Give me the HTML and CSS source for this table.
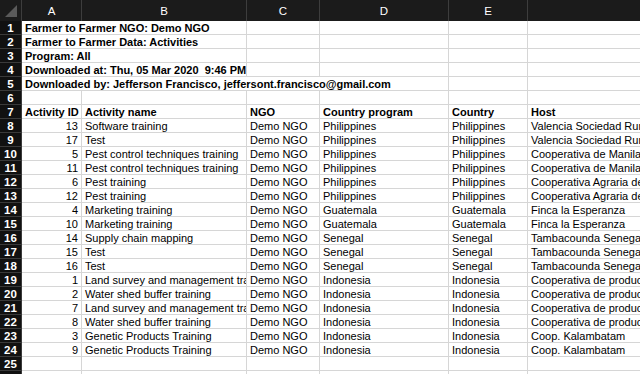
FILE: index.html
```html
<!DOCTYPE html>
<html>
<head>
<meta charset="utf-8">
<link rel="stylesheet" href="styles.css">
</head>
<body>
<div class="sheet">
  <div class="ch corner"><span class="tri"></span></div>
  <div class="ch">A</div><div class="ch">B</div><div class="ch">C</div><div class="ch">D</div><div class="ch">E</div><div class="ch"></div>

  <div class="rn">1</div><div class="c b span2">Farmer to Farmer NGO: Demo NGO</div><div class="c"></div><div class="c"></div><div class="c"></div><div class="c"></div>
  <div class="rn">2</div><div class="c b span2">Farmer to Farmer Data: Activities</div><div class="c"></div><div class="c"></div><div class="c"></div><div class="c"></div>
  <div class="rn">3</div><div class="c b span2">Program: All</div><div class="c"></div><div class="c"></div><div class="c"></div><div class="c"></div>
  <div class="rn">4</div><div class="c b span2">Downloaded at: Thu, 05 Mar 2020&nbsp; 9:46 PM UTC</div><div class="c"></div><div class="c"></div><div class="c"></div><div class="c"></div>
  <div class="rn">5</div><div class="c b span4">Downloaded by: Jefferson Francisco, jeffersont.francisco@gmail.com</div><div class="c"></div><div class="c"></div>
  <div class="rn">6</div><div class="c"></div><div class="c"></div><div class="c"></div><div class="c"></div><div class="c"></div><div class="c"></div>
  <div class="rn">7</div><div class="c b">Activity ID</div><div class="c b">Activity name</div><div class="c b">NGO</div><div class="c b">Country program</div><div class="c b">Country</div><div class="c b">Host</div>

  <div class="rn">8</div><div class="c n">13</div><div class="c">Software training</div><div class="c">Demo NGO</div><div class="c">Philippines</div><div class="c">Philippines</div><div class="c">Valencia Sociedad Rural</div>
  <div class="rn">9</div><div class="c n">17</div><div class="c">Test</div><div class="c">Demo NGO</div><div class="c">Philippines</div><div class="c">Philippines</div><div class="c">Valencia Sociedad Rural</div>
  <div class="rn">10</div><div class="c n">5</div><div class="c">Pest control techniques training</div><div class="c">Demo NGO</div><div class="c">Philippines</div><div class="c">Philippines</div><div class="c">Cooperativa de Manila</div>
  <div class="rn">11</div><div class="c n">11</div><div class="c">Pest control techniques training</div><div class="c">Demo NGO</div><div class="c">Philippines</div><div class="c">Philippines</div><div class="c">Cooperativa de Manila</div>
  <div class="rn">12</div><div class="c n">6</div><div class="c">Pest training</div><div class="c">Demo NGO</div><div class="c">Philippines</div><div class="c">Philippines</div><div class="c">Cooperativa Agraria de</div>
  <div class="rn">13</div><div class="c n">12</div><div class="c">Pest training</div><div class="c">Demo NGO</div><div class="c">Philippines</div><div class="c">Philippines</div><div class="c">Cooperativa Agraria de</div>
  <div class="rn">14</div><div class="c n">4</div><div class="c">Marketing training</div><div class="c">Demo NGO</div><div class="c">Guatemala</div><div class="c">Guatemala</div><div class="c">Finca la Esperanza</div>
  <div class="rn">15</div><div class="c n">10</div><div class="c">Marketing training</div><div class="c">Demo NGO</div><div class="c">Guatemala</div><div class="c">Guatemala</div><div class="c">Finca la Esperanza</div>
  <div class="rn">16</div><div class="c n">14</div><div class="c">Supply chain mapping</div><div class="c">Demo NGO</div><div class="c">Senegal</div><div class="c">Senegal</div><div class="c">Tambacounda Senegal</div>
  <div class="rn">17</div><div class="c n">15</div><div class="c">Test</div><div class="c">Demo NGO</div><div class="c">Senegal</div><div class="c">Senegal</div><div class="c">Tambacounda Senegal</div>
  <div class="rn">18</div><div class="c n">16</div><div class="c">Test</div><div class="c">Demo NGO</div><div class="c">Senegal</div><div class="c">Senegal</div><div class="c">Tambacounda Senegal</div>
  <div class="rn">19</div><div class="c n">1</div><div class="c">Land survey and management training</div><div class="c">Demo NGO</div><div class="c">Indonesia</div><div class="c">Indonesia</div><div class="c">Cooperativa de productores</div>
  <div class="rn">20</div><div class="c n">2</div><div class="c">Water shed buffer training</div><div class="c">Demo NGO</div><div class="c">Indonesia</div><div class="c">Indonesia</div><div class="c">Cooperativa de productores</div>
  <div class="rn">21</div><div class="c n">7</div><div class="c">Land survey and management training</div><div class="c">Demo NGO</div><div class="c">Indonesia</div><div class="c">Indonesia</div><div class="c">Cooperativa de productores</div>
  <div class="rn">22</div><div class="c n">8</div><div class="c">Water shed buffer training</div><div class="c">Demo NGO</div><div class="c">Indonesia</div><div class="c">Indonesia</div><div class="c">Cooperativa de productores</div>
  <div class="rn">23</div><div class="c n">3</div><div class="c">Genetic Products Training</div><div class="c">Demo NGO</div><div class="c">Indonesia</div><div class="c">Indonesia</div><div class="c">Coop. Kalambatam</div>
  <div class="rn">24</div><div class="c n">9</div><div class="c">Genetic Products Training</div><div class="c">Demo NGO</div><div class="c">Indonesia</div><div class="c">Indonesia</div><div class="c">Coop. Kalambatam</div>
  <div class="rn">25</div><div class="c"></div><div class="c"></div><div class="c"></div><div class="c"></div><div class="c"></div><div class="c"></div>
  <div class="rn">26</div><div class="c"></div><div class="c"></div><div class="c"></div><div class="c"></div><div class="c"></div><div class="c"></div>
</div>
</body>
</html>
```
FILE: styles.css
```css
html, body {
  margin: 0;
  padding: 0;
  background: #ffffff;
  overflow: hidden;
}
body {
  width: 640px;
  height: 374px;
  font-family: "Liberation Sans", Arial, sans-serif;
  font-size: 11px;
  color: #000;
}
.sheet {
  display: grid;
  grid-template-columns: 22px 60px 165px 73px 129px 79px 120px;
  grid-template-rows: 21px;
  grid-auto-rows: 14px;
  width: 668px;
}
.ch {
  background: #1b1b1b;
  color: #ffffff;
  text-align: center;
  line-height: 22px;
  font-size: 11.5px;
  border-right: 1px solid #3d3d3d;
  box-sizing: border-box;
}
.corner {
  position: relative;
}
.tri {
  position: absolute;
  right: 4px;
  bottom: 4px;
  width: 0;
  height: 0;
  border-left: 12px solid transparent;
  border-bottom: 12px solid #5a5a5a;
}
.rn {
  background: #111111;
  color: #ffffff;
  font-weight: bold;
  font-size: 11.5px;
  text-align: center;
  line-height: 14px;
  border-bottom: 1px solid #3a3a3a;
  border-right: 1px solid #3a3a3a;
  box-sizing: border-box;
  overflow: hidden;
}
.c {
  border-right: 1px solid #d6d6d6;
  border-bottom: 1px solid #d6d6d6;
  box-sizing: border-box;
  padding: 1px 3px 0;
  line-height: 13px;
  white-space: nowrap;
  overflow: hidden;
}
.b { font-weight: bold; }
.n { text-align: right; padding-right: 3px; }
.span2 { grid-column: span 2; }
.span4 { grid-column: span 4; }
```
